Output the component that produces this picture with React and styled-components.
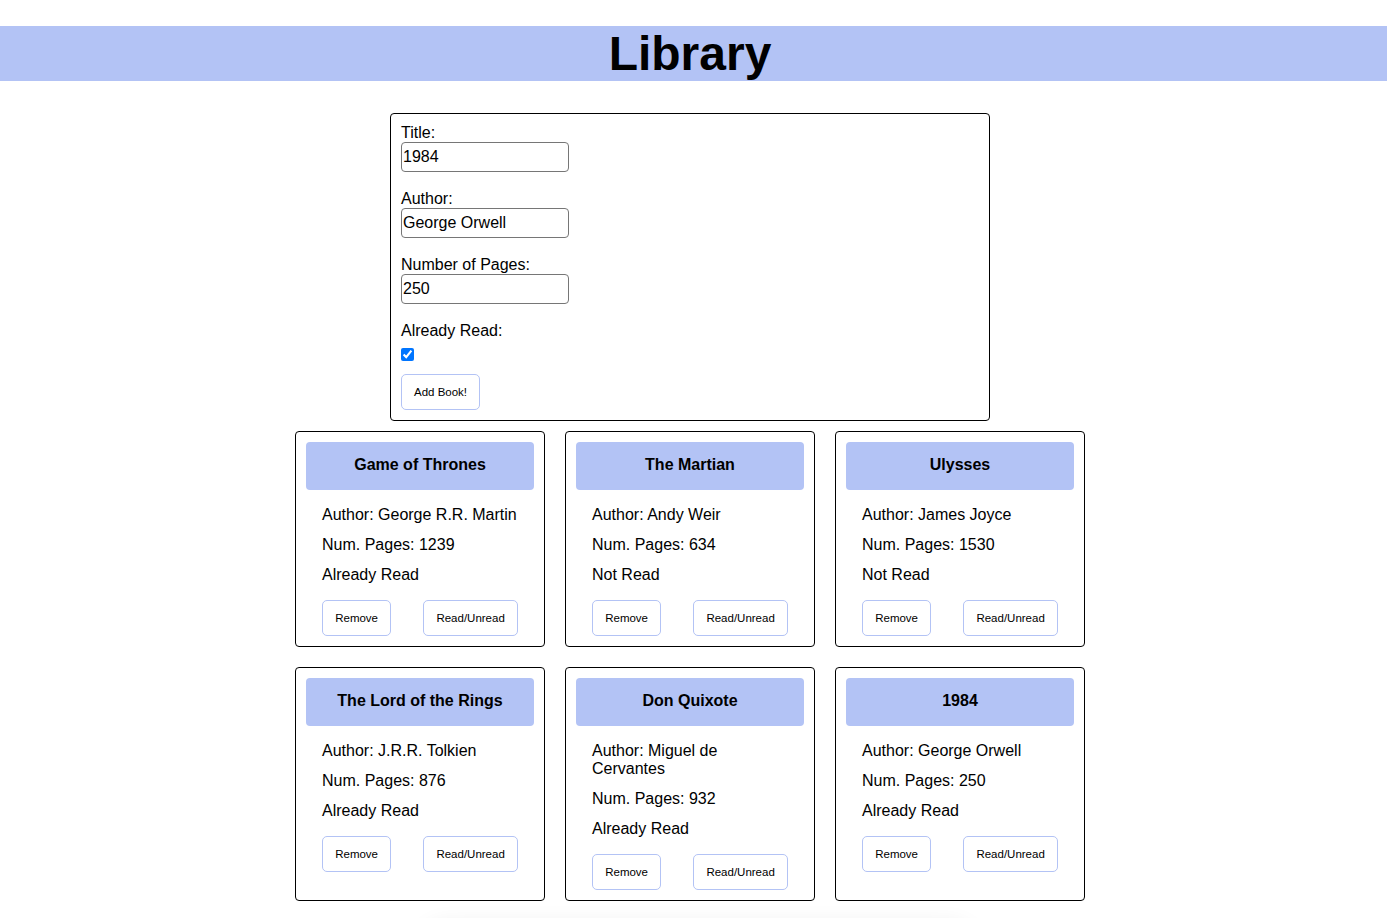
import React from "react";
import styled, { createGlobalStyle } from "styled-components";

const GlobalStyle = createGlobalStyle`
  html, body {
    margin: 0;
    padding: 0;
    background: #ffffff;
    font-family: "Liberation Sans", Arial, sans-serif;
    color: #000;
  }
  * { box-sizing: border-box; }
`;

const ACCENT = "#b3c3f5";

const Page = styled.div`
  padding-top: 26px;
  min-height: 918px;
  overflow: hidden;
`;

const Header = styled.h1`
  margin: 0;
  height: 55px;
  line-height: 55px;
  background: ${ACCENT};
  font-size: 48px;
  font-weight: 700;
  text-align: center;
  padding-right: 7px;
`;

const Main = styled.main`
  display: flex;
  flex-direction: column;
  align-items: center;
  padding-right: 7px;
`;

const Form = styled.form`
  width: 600px;
  margin-top: 32px;
  padding: 10px;
  border: 1px solid #000;
  border-radius: 4px;
  display: flex;
  flex-direction: column;
  align-items: flex-start;
`;

const Label = styled.label`
  display: block;
  font-size: 16px;
  line-height: 18px;
  margin-top: ${(p) => (p.$first ? "0" : "18px")};
`;

const TextInput = styled.input`
  display: block;
  width: 168px;
  height: 30px;
  padding: 0 1px;
  border: 1px solid #767676;
  border-radius: 4px;
  font-family: "Liberation Sans", Arial, sans-serif;
  font-size: 16px;
  color: #000;
  background: #fff;
`;

const Checkbox = styled.input`
  display: block;
  width: 13px;
  height: 13px;
  margin: 8px 0 13px 0;
  accent-color: #0075ff;
`;

const Button = styled.button`
  height: 36px;
  padding: 0 12px;
  background: #fff;
  border: 1px solid ${ACCENT};
  border-radius: 5px;
  font-family: "Liberation Sans", Arial, sans-serif;
  font-size: 11.5px;
  color: #000;
  cursor: pointer;
`;

const Grid = styled.div`
  display: grid;
  grid-template-columns: repeat(3, 250px);
  gap: 20px;
  margin-top: 10px;
`;

const Card = styled.div`
  border: 1px solid #000;
  border-radius: 4px;
  padding: 10px;
`;

const CardTitle = styled.div`
  background: ${ACCENT};
  border-radius: 4px;
  padding: 14px 8px 16px;
  font-size: 16px;
  line-height: 18px;
  font-weight: 700;
  text-align: center;
`;

const Info = styled.div`
  padding: 4px 16px 0;
`;

const InfoLine = styled.p`
  margin: 12px 0;
  font-size: 16px;
  line-height: 18px;
`;

const ButtonRow = styled.div`
  display: flex;
  justify-content: space-around;
  margin-top: 16px;
`;

const Footer = styled.div`
  width: 560px;
  height: 60px;
  margin: 22px auto 0;
  transform: translateX(4px);
  border-radius: 30px;
  box-shadow: 0 0 22px rgba(0, 0, 0, 0.07);
`;

const books = [
  { title: "Game of Thrones", author: "George R.R. Martin", pages: 1239, read: true },
  { title: "The Martian", author: "Andy Weir", pages: 634, read: false },
  { title: "Ulysses", author: "James Joyce", pages: 1530, read: false },
  { title: "The Lord of the Rings", author: "J.R.R. Tolkien", pages: 876, read: true },
  { title: "Don Quixote", author: "Miguel de Cervantes", pages: 932, read: true },
  { title: "1984", author: "George Orwell", pages: 250, read: true },
];

function BookCard({ book }) {
  return (
    <Card>
      <CardTitle>{book.title}</CardTitle>
      <Info>
        <InfoLine>Author: {book.author}</InfoLine>
        <InfoLine>Num. Pages: {book.pages}</InfoLine>
        <InfoLine>{book.read ? "Already Read" : "Not Read"}</InfoLine>
      </Info>
      <ButtonRow>
        <Button type="button">Remove</Button>
        <Button type="button">Read/Unread</Button>
      </ButtonRow>
    </Card>
  );
}

export default function App() {
  return (
    <>
      <GlobalStyle />
      <Page>
        <Header>Library</Header>
        <Main>
          <Form onSubmit={(e) => e.preventDefault()}>
            <Label $first htmlFor="title">Title:</Label>
            <TextInput id="title" type="text" defaultValue="1984" />
            <Label htmlFor="author">Author:</Label>
            <TextInput id="author" type="text" defaultValue="George Orwell" />
            <Label htmlFor="pages">Number of Pages:</Label>
            <TextInput id="pages" type="text" defaultValue="250" />
            <Label htmlFor="read">Already Read:</Label>
            <Checkbox id="read" type="checkbox" defaultChecked />
            <Button type="submit">Add Book!</Button>
          </Form>
          <Grid>
            {books.map((b) => (
              <BookCard key={b.title} book={b} />
            ))}
          </Grid>
        </Main>
        <Footer />
      </Page>
    </>
  );
}
